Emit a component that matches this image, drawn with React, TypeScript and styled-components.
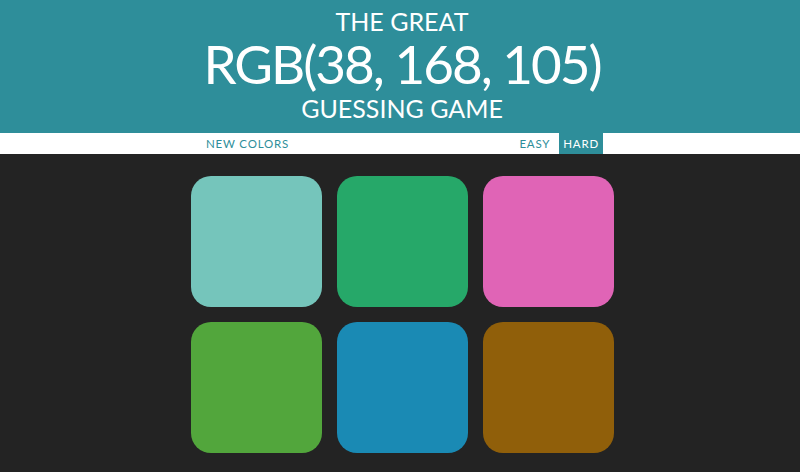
import React from "react";
import styled, { createGlobalStyle } from "styled-components";

const Global = createGlobalStyle`
  html, body { margin: 0; padding: 0; background: #232323; }
  body { font-family: Lato, "Open Sans", sans-serif; }
`;

const Page = styled.div`
  min-height: 472px;
  background: #232323;
`;

const Header = styled.h1`
  margin: 0;
  height: 133px;
  box-sizing: border-box;
  padding: 6px 0 0 4px;
  background: #2e8e9a;
  color: #ffffff;
  text-align: center;
  font-weight: 400;
  text-transform: uppercase;
  display: flex;
  flex-direction: column;
  align-items: center;
`;

const Small = styled.span<{ $top?: number }>`
  font-size: 25px;
  line-height: 30px;
  margin-top: ${(p) => p.$top ?? 0}px;
`;

const Big = styled.span`
  font-size: 53px;
  line-height: 54px;
  letter-spacing: -2px;
  margin-top: 1px;
`;

const Nav = styled.div`
  background: #ffffff;
  height: 21px;
  padding-left: 4px;
`;

const NavInner = styled.div`
  width: 402px;
  margin: 0 auto;
  height: 21px;
  display: flex;
  align-items: stretch;
`;

const NavButton = styled.button<{ $active?: boolean }>`
  border: none;
  background: ${(p) => (p.$active ? "#2e8e9a" : "#ffffff")};
  color: ${(p) => (p.$active ? "#ffffff" : "#2e8e9a")};
  font-family: Lato, "Open Sans", sans-serif;
  font-size: 11.5px;
  letter-spacing: 0.8px;
  text-transform: uppercase;
  padding: 0 ${(p) => (p.$active ? 4 : 5)}px;
  margin: 0 0 0 ${(p) => (p.$active ? 4 : 0)}px;
  height: 21px;
  cursor: pointer;
`;

const Spacer = styled.div`
  flex: 1;
`;

const BoardArea = styled.div`
  padding-left: 4px;
`;

const Board = styled.div`
  width: 438px;
  margin: 14px auto 0;
  display: grid;
  grid-template-columns: repeat(3, 131px);
  grid-auto-rows: 131px;
  column-gap: 15px;
  row-gap: 15px;
  padding: 7.5px;
  box-sizing: border-box;
`;

const Square = styled.div<{ $color: string }>`
  background: ${(p) => p.$color};
  border-radius: 20px;
`;

const colors = [
  "rgb(117, 197, 187)",
  "rgb(38, 168, 105)",
  "rgb(224, 100, 182)",
  "rgb(82, 166, 60)",
  "rgb(26, 138, 180)",
  "rgb(144, 95, 10)",
];

export default function App() {
  return (
    <Page>
      <Global />
      <Header>
        <Small>The Great</Small>
        <Big>RGB(38, 168, 105)</Big>
        <Small $top={2}>Guessing Game</Small>
      </Header>
      <Nav>
        <NavInner>
          <NavButton>New Colors</NavButton>
          <Spacer />
          <NavButton>Easy</NavButton>
          <NavButton $active>Hard</NavButton>
        </NavInner>
      </Nav>
      <BoardArea>
        <Board>
          {colors.map((c) => (
            <Square key={c} $color={c} />
          ))}
        </Board>
      </BoardArea>
    </Page>
  );
}
